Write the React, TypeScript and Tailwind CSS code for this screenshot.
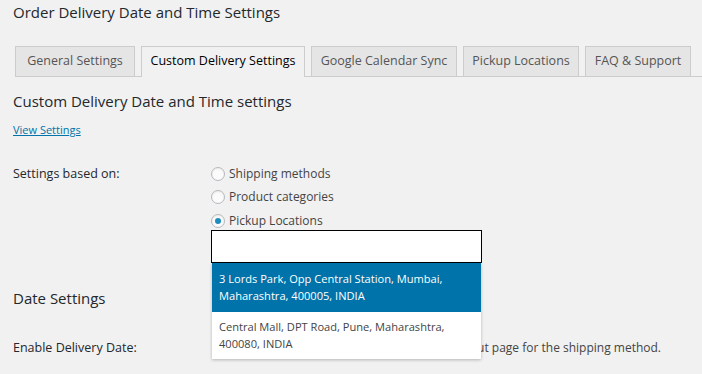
import React from "react";

const tabs = [
  { label: "General Settings", w: "w-[120px]" },
  { label: "Custom Delivery Settings", w: "w-[164px]", active: true },
  { label: "Google Calendar Sync", w: "w-[146px]" },
  { label: "Pickup Locations", w: "w-[116px]" },
  { label: "FAQ & Support", w: "w-[106px]" },
];

const basedOn = [
  { label: "Shipping methods" },
  { label: "Product categories" },
  { label: "Pickup Locations", checked: true },
];

function Radio({ checked }: { checked?: boolean }) {
  return (
    <span className="flex h-[14px] w-[14px] shrink-0 items-center justify-center rounded-full border border-[#b4b9be] bg-[#fbfbfb] shadow-[inset_0_1px_2px_rgba(0,0,0,0.07)]">
      {checked && <span className="h-[6px] w-[6px] rounded-full bg-[#1e8cbe]" />}
    </span>
  );
}

export default function App() {
  return (
    <div className="min-h-screen overflow-hidden bg-[#f1f1f1] pl-[13px] font-['Open_Sans',sans-serif] text-[#444]">
      <h1 className="text-[15px] leading-[24px] text-[#23282d]">Order Delivery Date and Time Settings</h1>

      <div className="mt-[22px] ml-[2px] flex items-end gap-[6px] border-b border-[#ccc]">
        {tabs.map((t) => (
          <div
            key={t.label}
            className={
              t.active
                ? `${t.w} -mb-px flex h-[31px] items-center justify-center border border-b-0 border-[#ccc] bg-[#f1f1f1] pb-px text-[12.5px] text-black`
                : `${t.w} flex h-[30px] items-center justify-center border border-b-0 border-[#ccc] bg-[#e5e5e5] text-[12.5px] text-[#555]`
            }
          >
            {t.label}
          </div>
        ))}
      </div>

      <h2 className="mt-[14px] text-[15px] leading-[20px] text-[#23282d]">Custom Delivery Date and Time settings</h2>
      <a className="mt-[11px] block w-fit text-[11px] leading-[16px] text-[#0073aa] underline">View Settings</a>

      <div className="mt-[24px] flex">
        <div className="w-[198px] pt-[3px] text-[12.5px] leading-[18px] text-[#23282d]">Settings based on:</div>
        <div className="relative">
          {basedOn.map((o) => (
            <label key={o.label} className="flex h-[23.5px] items-center gap-[4px] text-[12px] leading-[18px]">
              <Radio checked={o.checked} />
              {o.label}
            </label>
          ))}
          <div className="absolute left-0 top-[68px] z-10 w-[271px]">
            <div className="h-[33px] border border-black bg-white" />
            <ul className="mx-px bg-white text-[11.1px] leading-[17px] shadow-[0_1px_3px_rgba(0,0,0,0.25)]">
              <li className="bg-[#0073aa] pt-[7px] pb-[8px] pl-[7px] text-white">
                3 Lords Park, Opp Central Station, Mumbai,
                <br />
                Maharashtra, 400005, INDIA
              </li>
              <li className="pt-[6px] pb-[7px] pl-[7px] text-[#444]">
                Central Mall, DPT Road, Pune, Maharashtra,
                <br />
                400080, INDIA
              </li>
            </ul>
          </div>
        </div>
      </div>

      <h2 className="mt-[55px] text-[15px] leading-[20px] text-[#23282d]">Date Settings</h2>

      <div className="mt-[31px] flex">
        <div className="w-[198px] text-[12.5px] leading-[18px] text-[#23282d]">Enable Delivery Date:</div>
        <p className="pl-[11px] text-[12px] leading-[18px]">
          Enable Delivery Date capability on the Checkout page for the shipping method.
        </p>
      </div>
    </div>
  );
}
